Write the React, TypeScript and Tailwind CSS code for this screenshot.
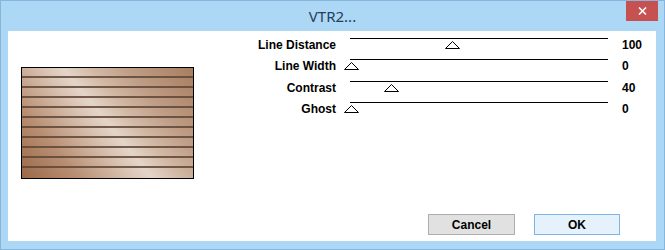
import React from "react";

const TRACK = 258;

function Tri({ value }: { value: number }) {
  const center = (value / 255) * TRACK + 1;
  return (
    <svg
      width="15"
      height="8"
      viewBox="0 0 15 8"
      className="absolute top-[2px]"
      style={{ left: center - 7.5 }}
    >
      <polygon points="7.5,0.5 14.5,7.5 0.5,7.5" fill="white" stroke="black" strokeWidth="1" />
    </svg>
  );
}

const rows = [
  { label: "Line Distance", value: 100 },
  { label: "Line Width", value: 0 },
  { label: "Contrast", value: 40 },
  { label: "Ghost", value: 0 },
];

export default function App() {
  return (
    <div className="w-[665px] h-[250px] bg-[#acd7f5] border border-[#86b6dc] flex flex-col overflow-hidden">
      <div className="relative h-[30px] shrink-0 flex items-center justify-center">
        <span
          className="text-[15px] text-[#23405e] leading-none pt-[1px]"
          style={{ fontFamily: '"Noto Sans", "Open Sans", sans-serif' }}
        >
          VTR2...
        </span>
        <div className="absolute right-[6px] top-0 w-[32px] h-[20px] bg-[#c75050] flex items-center justify-center">
          <svg width="9" height="8" viewBox="0 0 9 8">
            <path d="M1 0.5 L8 7.5 M8 0.5 L1 7.5" stroke="white" strokeWidth="1.6" />
          </svg>
        </div>
      </div>
      <div
        className="ml-[7px] w-[648px] h-[210px] bg-white flex flex-col"
        style={{ fontFamily: '"Liberation Sans", Arial, sans-serif' }}
      >
        <div className="flex h-[183px]">
          <div className="w-[200px] pl-[13px] pt-[36px]">
            <div className="w-[173px] h-[112px] border border-black bg-[linear-gradient(51deg,#9a6947_0%,#b98f74_22%,#d9c3b3_42%,#e4d5c9_50%,#d3bba8_60%,#bf9d86_75%,#a77d60_100%)] flex flex-col">
              {Array.from({ length: 11 }).map((_, i) => (
                <div
                  key={i}
                  className={
                    i < 10
                      ? "h-[10px] shrink-0 border-b-2 border-[#5f4636]/85"
                      : "flex-1"
                  }
                />
              ))}
            </div>
          </div>
          <div className="pt-[7px] flex flex-col">
            {rows.map((r) => (
              <div key={r.label} className="h-[21.33px] flex items-start">
                <div className="w-[128px] text-right text-[12px] font-bold leading-[14px] text-black">
                  {r.label}
                </div>
                <div className="ml-[14px] w-[258px] h-[12px] relative border-t border-black">
                  <Tri value={r.value} />
                </div>
                <div className="ml-[14px] text-[12px] font-bold leading-[14px] text-black">
                  {r.value}
                </div>
              </div>
            ))}
          </div>
        </div>
        <div className="flex pl-[420px] gap-[19px]">
          <button className="w-[87px] h-[21px] bg-[#e1e1e1] border border-[#adadad] text-[12px] font-bold text-black leading-none">
            Cancel
          </button>
          <button className="w-[86px] h-[21px] bg-[#e5f1fb] border border-[#7eb4ea] text-[12px] font-bold text-black leading-none">
            OK
          </button>
        </div>
      </div>
    </div>
  );
}
